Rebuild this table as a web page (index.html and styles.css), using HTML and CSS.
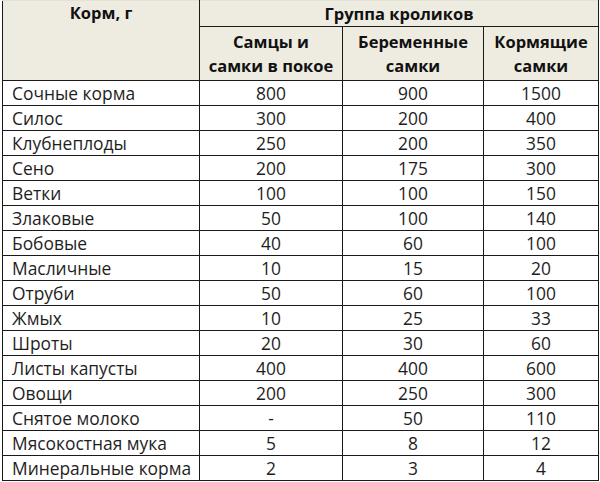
FILE: index.html
```html
<!DOCTYPE html>
<html lang="ru">
<head>
<meta charset="utf-8">
<link rel="stylesheet" href="styles.css">
</head>
<body>
<table class="feed">
  <colgroup>
    <col class="c1"><col class="c2"><col class="c3"><col class="c4">
  </colgroup>
  <thead>
    <tr class="h1">
      <th rowspan="2" class="corner">Корм, г</th>
      <th colspan="3" class="group">Группа кроликов</th>
    </tr>
    <tr class="h2">
      <th>Самцы и<br>самки в покое</th>
      <th>Беременные<br>самки</th>
      <th>Кормящие<br>самки</th>
    </tr>
  </thead>
  <tbody>
    <tr><td>Сочные корма</td><td>800</td><td>900</td><td>1500</td></tr>
    <tr><td>Силос</td><td>300</td><td>200</td><td>400</td></tr>
    <tr><td>Клубнеплоды</td><td>250</td><td>200</td><td>350</td></tr>
    <tr><td>Сено</td><td>200</td><td>175</td><td>300</td></tr>
    <tr><td>Ветки</td><td>100</td><td>100</td><td>150</td></tr>
    <tr><td>Злаковые</td><td>50</td><td>100</td><td>140</td></tr>
    <tr><td>Бобовые</td><td>40</td><td>60</td><td>100</td></tr>
    <tr><td>Масличные</td><td>10</td><td>15</td><td>20</td></tr>
    <tr><td>Отруби</td><td>50</td><td>60</td><td>100</td></tr>
    <tr><td>Жмых</td><td>10</td><td>25</td><td>33</td></tr>
    <tr><td>Шроты</td><td>20</td><td>30</td><td>60</td></tr>
    <tr><td>Листы капусты</td><td>400</td><td>400</td><td>600</td></tr>
    <tr><td>Овощи</td><td>200</td><td>250</td><td>300</td></tr>
    <tr><td>Снятое молоко</td><td>-</td><td>50</td><td>110</td></tr>
    <tr><td>Мясокостная мука</td><td>5</td><td>8</td><td>12</td></tr>
    <tr><td>Минеральные корма</td><td>2</td><td>3</td><td>4</td></tr>
  </tbody>
</table>
</body>
</html>
```

FILE: styles.css
```css
html, body {
  margin: 0;
  padding: 0;
  background: #ffffff;
}
body {
  padding: 0 0 0 2px;
  font-family: "Open Sans", "DejaVu Sans", sans-serif;
  color: #1e1e1e;
}
.feed {
  border-collapse: collapse;
  table-layout: fixed;
  width: 596px;
  font-size: 17.4px;
}
.c1 { width: 197px; }
.c2 { width: 143px; }
.c3 { width: 141px; }
.c4 { width: 115px; }
.feed th {
  background: #eeece1;
  font-weight: bold;
  font-size: 16.5px;
  border: 1px solid #1a1a1a;
  text-align: center;
  padding: 0;
  line-height: 24px;
  color: #111;
}
.feed .h1 th {
  height: 25px;
  border-top-color: #e4e2d6;
}
.feed .corner {
  vertical-align: top;
}
.feed .h2 th {
  height: 53px;
  vertical-align: middle;
}
.feed td {
  border: 1px solid #1a1a1a;
  height: 24px;
  padding: 0;
  line-height: 24px;
  text-align: center;
}
.feed td:first-child {
  text-align: left;
  padding-left: 9px;
}
```
